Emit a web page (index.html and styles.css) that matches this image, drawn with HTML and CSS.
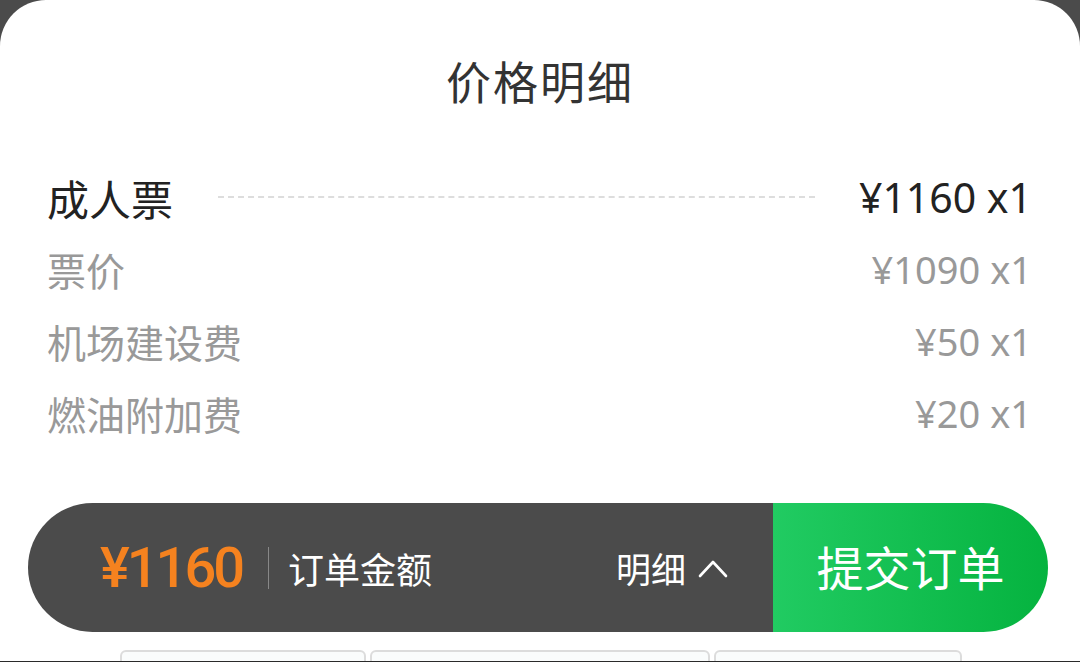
FILE: index.html
```html
<!DOCTYPE html>
<html lang="zh-CN">
<head>
    <meta charset="UTF-8">
    <title>价格明细</title>
    <link rel="stylesheet" href="styles.css">
</head>
<body>

<div class="sheet">
    <h2 class="sheet-title">价格明细</h2>

    <!-- Price rows -->
    <div class="price-list">
        <div class="price-row main">
            <span class="label">成人票</span>
            <span class="dots"></span>
            <span class="amount">¥1160 x1</span>
        </div>
        <div class="price-row">
            <span class="label">票价</span>
            <span class="amount">¥1090 x1</span>
        </div>
        <div class="price-row">
            <span class="label">机场建设费</span>
            <span class="amount">¥50 x1</span>
        </div>
        <div class="price-row">
            <span class="label">燃油附加费</span>
            <span class="amount">¥20 x1</span>
        </div>
    </div>

    <!-- Order bar -->
    <div class="order-bar">
        <div class="order-info">
            <span class="total">¥1160</span>
            <span class="divider"></span>
            <span class="total-label">订单金额</span>
            <span class="detail-toggle">明细
                <svg width="30" height="20" viewBox="0 0 30 20">
                    <path d="M2 18 L15 4 L28 18" fill="none" stroke="#fff" stroke-width="2.6" stroke-linecap="round" stroke-linejoin="round"/>
                </svg>
            </span>
        </div>
        <button class="submit-btn">提交订单</button>
    </div>

    <!-- Cards peeking underneath -->
    <div class="under-cards">
        <div class="under-card c1"></div>
        <div class="under-card c2"></div>
        <div class="under-card c3"></div>
    </div>
</div>

</body>
</html>
```

FILE: styles.css
```css
body {
    margin: 0;
    padding: 0;
    background-color: #4b4b4b;
    font-family: "Noto Sans", "Noto Sans CJK SC", sans-serif;
}
.sheet {
    height: 661px;
    background: #fff;
    border-radius: 46px 46px 0 0;
    border-bottom: 1px solid #2a2a2a;
    overflow: hidden;
    display: flex;
    flex-direction: column;
}
.sheet-title {
    flex-shrink: 0;
    margin: 53px 0 0;
    font-size: 45px;
    line-height: 60px;
    font-weight: 400;
    text-align: center;
    color: #333;
    letter-spacing: 2px;
}

/* Price rows */
.price-list {
    flex-shrink: 0;
    margin-top: 48px;
    padding: 0 48px 0 47px;
}
.price-row {
    display: flex;
    align-items: center;
    height: 72px;
    font-size: 39px;
    color: #999;
}
.price-row .label {
    font-family: "Noto Sans CJK SC", sans-serif;
}
.price-row .amount {
    margin-left: auto;
    font-size: 38px;
}
.price-row.main {
    color: #222;
}
.price-row.main .label {
    font-size: 42px;
}
.price-row.main .amount {
    margin-left: 0;
    font-size: 41px;
}
.dots {
    flex: 1;
    margin: 0 44px 0 45px;
    border-top: 2px dashed #ddd;
    height: 0;
}

/* Order bar */
.order-bar {
    flex-shrink: 0;
    display: flex;
    height: 129px;
    margin: 54px 32px 0 28px;
    border-radius: 65px;
    overflow: hidden;
}
.order-info {
    flex: 1;
    display: flex;
    align-items: center;
    padding: 0 45px 0 72px;
    background-color: #4b4b4b;
    color: #fff;
}
.total {
    font-family: Roboto, "Noto Sans", sans-serif;
    font-weight: 500;
    font-size: 56px;
    color: #f5821f;
    letter-spacing: -3px;
}
.divider {
    width: 1px;
    height: 42px;
    margin: 0 19px 0 26px;
    background-color: #888;
}
.total-label {
    font-family: "Noto Sans CJK SC", sans-serif;
    font-size: 36px;
}
.detail-toggle {
    margin-left: auto;
    display: flex;
    align-items: center;
    gap: 12px;
    font-family: "Noto Sans CJK SC", sans-serif;
    font-size: 35px;
}
.submit-btn {
    width: 275px;
    border: none;
    padding: 0 0 4px;
    background: linear-gradient(90deg, #21cb62, #05b33f);
    color: #fff;
    font-family: "Noto Sans CJK SC", sans-serif;
    font-size: 47px;
    cursor: pointer;
}

/* Cards peeking underneath */
.under-cards {
    flex-shrink: 0;
    display: flex;
    margin: 18px 0 0 120px;
    gap: 4px;
}
.under-card {
    height: 20px;
    border: 2px solid #dcdcdc;
    border-radius: 6px;
    background: #fafcfc;
}
.c1 { width: 242px; }
.c2 { width: 336px; }
.c3 { width: 244px; }
```
